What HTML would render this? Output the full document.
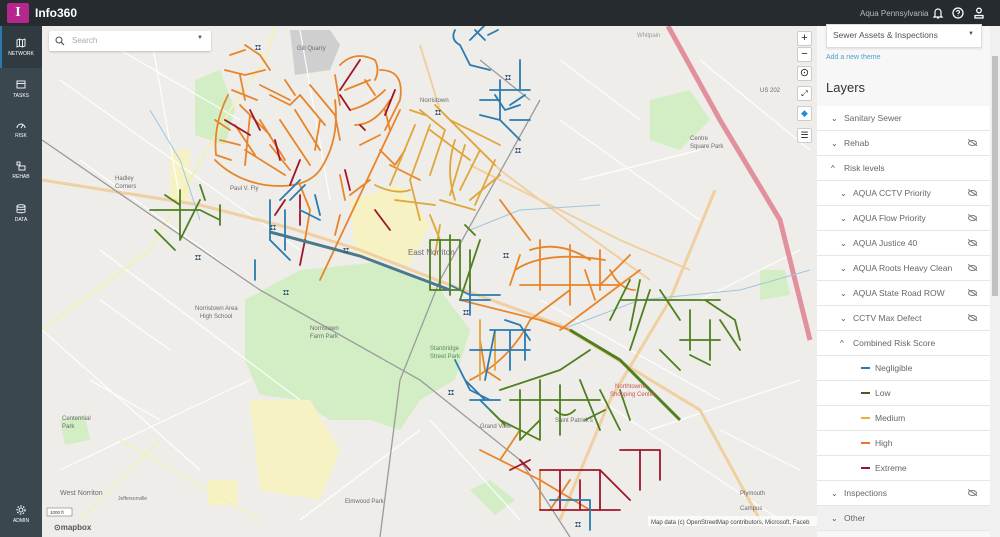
<!DOCTYPE html>
<html><head><meta charset="utf-8"><style>
*{margin:0;padding:0;box-sizing:border-box}
body{width:1000px;height:537px;overflow:hidden;font-family:"Liberation Sans",sans-serif;background:#eeede9;position:relative}
#top{position:absolute;left:0;top:0;width:1000px;height:26px;background:#262b2f;color:#fff}
#logo{position:absolute;left:7px;top:3px;width:22px;height:20px;background:#b5268f;border-radius:2px;color:#fff;font:bold 14px "Liberation Serif",serif;text-align:center;line-height:20px}
#title{position:absolute;left:35px;top:6px;font-size:12px;font-weight:bold}
#org{position:absolute;left:860px;top:9px;font-size:8px;color:#b5bcc2}
#side{position:absolute;left:0;top:26px;width:42px;height:511px;background:#3a474f}
.nav{position:absolute;left:0;width:42px;text-align:center;color:#fff;font-size:5px}
.nav svg{display:block;margin:0 auto 3px}
#map{position:absolute;left:42px;top:26px;width:775px;height:511px;overflow:hidden;background:#eeede9}
#panel{position:absolute;left:817px;top:26px;width:173px;height:511px;background:#f7f7f7}
#sb{position:absolute;left:990px;top:26px;width:10px;height:511px;background:#f0f0f0}
#sb div{position:absolute;left:2px;top:30px;width:6px;height:240px;background:#c1c1c1}
.row{position:absolute;left:0;width:173px;height:25px;background:#fff;border-bottom:1px solid #e6e6e6;font-size:8.5px;color:#666;line-height:25px}
.row .c{position:absolute;top:0;font-size:8px;color:#555}
.eye{position:absolute;right:13px;top:9px;width:9px;height:6px;border:1.3px solid #777;border-radius:50%}
.eye:after{content:"";position:absolute;left:-2px;top:1px;width:11px;height:1.3px;background:#777;transform:rotate(35deg)}
.sw{position:absolute;left:44px;top:11px;width:9px;height:2px}
.btn{position:absolute;left:797px;width:15px;height:15px;background:#fff;border:1px solid #ccc;border-radius:2px;font-size:11px;text-align:center;line-height:13px;color:#222}
</style></head><body>
<div id="top"><div id="logo">I</div><div id="title">Info360</div><div id="org">Aqua Pennsylvania</div>
<svg style="position:absolute;left:932px;top:7px" width="12" height="12" viewBox="0 0 12 12"><path d="M3 9V5a3 3 0 016 0v4l1 1H2zM5 11h2" fill="none" stroke="#fff" stroke-width="1.2"/></svg>
<svg style="position:absolute;left:952px;top:7px" width="12" height="12" viewBox="0 0 12 12"><circle cx="6" cy="6" r="5" fill="none" stroke="#fff" stroke-width="1.3"/><path d="M4.5 4.8a1.5 1.5 0 113 .3c0 1-1.5 1-1.5 2M6 8.5v.6" fill="none" stroke="#fff" stroke-width="1.2"/></svg>
<svg style="position:absolute;left:973px;top:7px" width="12" height="12" viewBox="0 0 12 12"><circle cx="6" cy="3.5" r="2.3" fill="none" stroke="#fff" stroke-width="1.3"/><path d="M2 11V8.5h8V11z" fill="none" stroke="#fff" stroke-width="1.3"/></svg>
</div>
<div id="side">
<div style="position:absolute;left:0;top:0;width:42px;height:42px;background:#2f3a41;border-left:2px solid #2a7ab0"></div>
<div class="nav" style="top:12px"><svg width="10" height="10" viewBox="0 0 10 10"><path d="M1 2l2.5-1 3 1L9 1v7l-2.5 1-3-1L1 9zM3.5 1v7M6.5 2v7" fill="none" stroke="#fff" stroke-width=".9"/></svg>NETWORK</div>
<div class="nav" style="top:54px"><svg width="10" height="10" viewBox="0 0 10 10"><rect x="1" y="1" width="8" height="7" fill="none" stroke="#fff" stroke-width=".9"/><path d="M1 3.5h8" stroke="#fff" stroke-width=".9"/></svg>TASKS</div>
<div class="nav" style="top:94px"><svg width="10" height="10" viewBox="0 0 10 10"><path d="M1 8a4 4 0 018 0M5 8l2-3" fill="none" stroke="#fff" stroke-width=".9"/></svg>RISK</div>
<div class="nav" style="top:135px"><svg width="10" height="10" viewBox="0 0 10 10"><rect x="1" y="1" width="3" height="3" fill="none" stroke="#fff" stroke-width=".9"/><rect x="3" y="5" width="6" height="4" fill="none" stroke="#fff" stroke-width=".9"/></svg>REHAB</div>
<div class="nav" style="top:178px"><svg width="10" height="10" viewBox="0 0 10 10"><ellipse cx="5" cy="2" rx="4" ry="1.3" fill="none" stroke="#fff" stroke-width=".9"/><path d="M1 2v6c0 1 8 1 8 0V2M1 5c0 1 8 1 8 0" fill="none" stroke="#fff" stroke-width=".9"/></svg>DATA</div>
<div class="nav" style="top:479px"><svg width="10" height="10" viewBox="0 0 10 10"><circle cx="5" cy="5" r="2" fill="none" stroke="#fff" stroke-width=".9"/><circle cx="5" cy="5" r="4" fill="none" stroke="#fff" stroke-width="1.2" stroke-dasharray="1.5 1.5"/></svg>ADMIN</div>
</div>
<div id="map">
<svg width="775" height="511" viewBox="42 26 775 511">
<path d="M290 30h40l10 15-10 25-35 5z" fill="#cfcfcf"/>
<g fill="#d3edc5"><path d="M245 300L300 270 380 262 440 290 470 330 455 380 420 400 400 430 370 420 330 420 300 400 260 395 245 360z"/><path d="M195 80l25-10 15 40-10 35-30-10z"/><path d="M650 100l40-10 20 30-30 30-30-10z"/><path d="M760 270l25 0 5 25-30 5z"/><path d="M470 490l20-10 25 20-20 15z"/><path d="M60 420l25-5 5 25-25 5z"/></g>
<g fill="#f6f2c3"><path d="M350 200l50-15 30 40-20 40-55-10z"/><path d="M250 400l60 0 30 50-20 50-60-10z"/><path d="M170 150l20 0 0 50-20 0z"/><path d="M208 480l30 0 0 25-30 0z"/></g>
<g fill="none" stroke="#fff" stroke-width="1.2" opacity=".9">
<path d="M60 80L300 250M80 160L260 290M100 250L300 400M42 330L200 470M150 30L180 200M300 30L330 200M560 120L700 220M540 300L720 400M600 400L780 520M700 60L810 150M430 420L520 520M60 470L250 380M120 50L240 120M700 300L800 250M650 430L800 380M300 520L420 430M580 180L700 150M560 60L640 120M90 380L160 420M100 300L170 350M720 430L800 470"/>
</g>
<g fill="none" stroke-width="3">
<path d="M42 180L200 205 290 228 360 250 450 285 560 325 700 410 760 520" stroke="#f0cfa0"/>
<path d="M420 45L440 110 500 170 580 230 650 280" stroke="#f0cfa0" stroke-width="2"/>
<path d="M715 190L670 300 610 400 560 520" stroke="#f0cfa0"/>
<path d="M470 165L620 240 690 270" stroke="#f0cfa0" stroke-width="2"/>
<path d="M42 330L150 250 230 110 265 60 275 26" stroke="#f3f0b8" stroke-width="2"/>
<path d="M668 26L720 120 780 220 810 340" stroke="#e2909e" stroke-width="5"/>
<path d="M120 440L260 520M80 520L160 440" stroke="#f3f0b8" stroke-width="1.5"/>
</g>
<g fill="none" stroke="#9a9a9a" stroke-width="1.3"><path d="M540 100L440 280 400 380 380 537"/><path d="M42 140L260 290 420 380 520 460 570 537"/><path d="M480 60L530 100"/></g>
<g fill="none" stroke="#9ec7df" stroke-width="1"><path d="M150 110L180 160 200 220M470 230L520 210 600 205M560 330L640 300 740 290 810 270"/></g>
<g fill="none" stroke-linecap="round" stroke-linejoin="round" stroke-width="1.8">
<g stroke="#e8842a">
<path d="M245 45l15 10 10 15M230 55l15-5M225 70l20 5 20-5M240 75l5 25M232 90l25 10M270 95l20 10 10-10M260 85l30 15M285 80l10 15"/>
<path d="M228 95q-15 30-12 60l15 5M215 120l15 10M220 140l20 5M215 160q20 20 50 25 40 5 55-15 20-30 15-70M240 105l30 30M250 115l-5 50M235 125l20 30M260 120l25 40M270 145l20 25M245 150l40 25M280 120l30 45M295 110l25 40M300 95l25 30M310 85l25 30 5 25M320 120l-5 30"/>
<path d="M340 65q15-15 35-5 5 10 0 20M335 75l5 30M345 90l25-10M350 110q20-5 35-20M355 125q20 0 35-25M365 80l10 15M380 70q25 0 20 30l-15 30M385 110l5 20"/>
<path d="M400 110l-80 170M360 145l20-10M380 150l15 15 10-15M390 165l30 15M300 185l10 25 -5 30M340 175l5 25M350 195l20-15M340 215l-5 20"/>
<path d="M530 250q30-10 60 10M515 270q30-20 90-10M520 285h100M540 240v50M570 245v60M600 250v40M630 255l-30 30M460 300l80 20 30 10M560 330q40-30 80-60M500 200l30 40M520 255l-10 30M585 270l10 30M610 270q10 20 25 20"/>
<path d="M470 380q40-20 60-60l40-30M480 450l60 30 50 30M500 460l20-30M540 470v40M570 480l-20 30M480 340l5 30 15 10"/>
</g>
<g stroke="#e0a63a"><path d="M415 125l-25 60M430 125l-20 55 10 40M445 130l-15 45M455 140q-10 30 0 60M465 145l-15 50M480 150l-20 40M495 160l-20 45M500 175l-30 25M375 185q20 10 35 5M395 200l40 5M440 200l35 10M430 215l10 25M440 225l-5 30M410 110l15 5M420 110l25 20M435 105l60 60M430 130l40 30M450 120l50 25"/><path d="M480 320v60M495 330v40"/></g>
<g stroke="#a0152a"><path d="M225 120l25 15M250 110l10 20M275 140l5 20M300 160l-10 25M285 200l-10 15M345 170l5 20M340 95l10 15M360 60l-20 30M395 90l-10 25M360 125l5 5M375 210l15 20M300 195l0 30M520 460l10 10M540 470h60v40M560 470v40M580 480v30M600 470l30 30M620 450h40v30M640 450v40M540 510h80M510 470l20-10M305 240l-5 25"/></g>
<g stroke="#2b7bb0"><path d="M455 30q-5 10 5 15l10 20 20 5M470 40l20-20M475 30l10 10M488 35l10-5M500 80v40l20 20M490 90h40M510 120h20M520 60v30M480 100h20M495 95l10 15 15-5M480 115l20 5M510 105l15-10"/><path d="M450 285l20 10 30 0M460 300h30M470 285v30M270 200v40l20 20M285 210v40M300 180l-20 20M255 260v20M290 200l15-15M300 210l20 10M315 195l5 20"/><path d="M490 330h40M495 330l-10 50M510 330v40M525 330v30M470 350h60M465 380l20 20M455 360l15 30 20 10M480 400l20 20M470 400h30M505 320l15 5 10 15"/><path d="M550 500h40v30"/></g>
<g stroke="#4f7f1f"><path d="M150 210l50 0 20 10M180 190v50M200 200l-20 40M220 205v20M165 195l15 10M200 185l5 15M155 230l20 20"/><path d="M430 240h30v50h-30zM440 240v50M450 235v60M470 250v40M480 240l-20 60M465 225l10 10"/><path d="M630 280l-20 40M640 280l-10 50M650 290l-20 60M620 300h100M660 290l20 30M690 310v40M710 320v40M680 340h40M720 320l20 30M660 350l20 20M705 300l30 20 5 20M690 355l20 10"/><path d="M500 390l60-20 30-20M510 400h90M520 390v50M540 380v60M560 385v50M580 380l20 50M600 390l20 40M620 390l10 30M500 420l40 20M540 420l-20 20M490 410l15 15M555 410q10 10 20 0M585 420l20-10"/></g>
</g>
<path d="M570 330l50 30 60 60" stroke="#4f7f1f" stroke-width="3" fill="none"/>
<path d="M270 232L360 256 450 290" stroke="#4a7a8a" stroke-width="3" fill="none"/>
<g fill="#3b5b77"><path d="M255 45h6l-3 5zM255 50h6l-3-5z"/><path d="M505 75h6l-3 5zM505 80h6l-3-5z"/><path d="M435 110h6l-3 5zM435 115h6l-3-5z"/><path d="M515 148h6l-3 5zM515 153h6l-3-5z"/><path d="M270 225h6l-3 5zM270 230h6l-3-5z"/><path d="M343 248h6l-3 5zM343 253h6l-3-5z"/><path d="M195 255h6l-3 5zM195 260h6l-3-5z"/><path d="M283 290h6l-3 5zM283 295h6l-3-5z"/><path d="M463 310h6l-3 5zM463 315h6l-3-5z"/><path d="M503 253h6l-3 5zM503 258h6l-3-5z"/><path d="M448 390h6l-3 5zM448 395h6l-3-5z"/><path d="M575 522h6l-3 5zM575 527h6l-3-5z"/></g>
<g font-family="Liberation Sans" font-size="6" fill="#6b6b6b"><text x="297" y="50">Gill Quarry</text><text x="420" y="102">Norristown</text><text x="408" y="255" font-size="8">East Norriton</text><text x="230" y="190">Paul V. Fly</text><text x="195" y="310">Norristown Area</text><text x="200" y="318">High School</text><text x="310" y="330">Norristown</text><text x="310" y="338">Farm Park</text><text x="430" y="350" fill="#5a8a5a">Stanbridge</text><text x="430" y="358" fill="#5a8a5a">Street Park</text><text x="115" y="180">Hadley</text><text x="115" y="188">Corners</text><text x="60" y="495" font-size="7">West Norriton</text><text x="62" y="420">Centennial</text><text x="62" y="428">Park</text><text x="480" y="428">Grand View</text><text x="555" y="422">Saint Patrick's</text><text x="345" y="503">Elmwood Park</text><text x="740" y="495">Plymouth</text><text x="740" y="510">Campus</text><text x="615" y="388" fill="#c55">Northtowne</text><text x="610" y="396" fill="#c55">Shopping Center</text><text x="690" y="140">Centre</text><text x="690" y="148">Square Park</text><text x="118" y="500" font-size="5">Jeffersonville</text><text x="760" y="92">US 202</text><text x="637" y="37" fill="#999">Whitpain</text></g>
<rect x="47" y="508" width="25" height="8" fill="#fff" stroke="#777" stroke-width=".6"/><text x="50" y="514" font-family="Liberation Sans" font-size="4.5" fill="#333">1000 ft</text>
<text x="54" y="530" font-family="Liberation Sans" font-size="8" font-weight="bold" fill="#555">⊙mapbox</text>
<rect x="648" y="516" width="169" height="10" fill="#fff" opacity=".7"/><text x="651" y="524" font-family="Liberation Sans" font-size="6" fill="#444">Map data (c) OpenStreetMap contributors, Microsoft, Faceb</text>
</svg>
</div>
<div style="position:absolute;left:49px;top:31px;width:162px;height:20px;background:#fff;border-radius:2px;box-shadow:0 1px 2px rgba(0,0,0,.2)">
<svg style="position:absolute;left:6px;top:5px" width="10" height="10" viewBox="0 0 10 10"><circle cx="4" cy="4" r="3" fill="none" stroke="#555" stroke-width="1.1"/><path d="M6.3 6.3L9 9" stroke="#555" stroke-width="1.2"/></svg>
<span style="position:absolute;left:23px;top:5px;font-size:8px;color:#aaa">Search</span>
<span style="position:absolute;left:148px;top:4px;font-size:6px;color:#555">▼</span></div>
<div class="btn" style="top:31px">+</div><div class="btn" style="top:47px">−</div>
<div class="btn" style="top:66px">⊙</div><div class="btn" style="top:86px;font-size:8px">⤢</div>
<div class="btn" style="top:106px;color:#2a8ad0;font-size:9px">◆</div><div class="btn" style="top:128px;font-size:9px">☰</div>
<div id="panel">
<div style="position:absolute;left:9px;top:-2px;width:156px;height:24px;background:#fff;border:1px solid #ddd;box-shadow:0 1px 2px rgba(0,0,0,.1)"><span style="position:absolute;left:6px;top:5px;font-size:8.5px;color:#555">Sewer Assets &amp; Inspections</span><span style="position:absolute;right:7px;top:6px;font-size:6px;color:#555">▼</span></div>
<div style="position:absolute;left:9px;top:28px;font-size:7px;color:#4aa3cf">Add a new theme</div>
<div style="position:absolute;left:9px;top:54px;font-size:13px;color:#333">Layers</div>
<div class="row" style="top:80px"><span class="c" style="left:14px">⌄</span><span style="position:absolute;left:27px">Sanitary Sewer</span></div>
<div class="row" style="top:105px"><span class="c" style="left:14px">⌄</span><span style="position:absolute;left:27px">Rehab</span><i class="eye"></i></div>
<div class="row" style="top:130px"><span class="c" style="left:14px">^</span><span style="position:absolute;left:27px">Risk levels</span></div>
<div class="row" style="top:155px"><span class="c" style="left:23px">⌄</span><span style="position:absolute;left:36px">AQUA CCTV Priority</span><i class="eye"></i></div>
<div class="row" style="top:180px"><span class="c" style="left:23px">⌄</span><span style="position:absolute;left:36px">AQUA Flow Priority</span><i class="eye"></i></div>
<div class="row" style="top:205px"><span class="c" style="left:23px">⌄</span><span style="position:absolute;left:36px">AQUA Justice 40</span><i class="eye"></i></div>
<div class="row" style="top:230px"><span class="c" style="left:23px">⌄</span><span style="position:absolute;left:36px">AQUA Roots Heavy Clean</span><i class="eye"></i></div>
<div class="row" style="top:255px"><span class="c" style="left:23px">⌄</span><span style="position:absolute;left:36px">AQUA State Road ROW</span><i class="eye"></i></div>
<div class="row" style="top:280px"><span class="c" style="left:23px">⌄</span><span style="position:absolute;left:36px">CCTV Max Defect</span><i class="eye"></i></div>
<div class="row" style="top:305px"><span class="c" style="left:23px">^</span><span style="position:absolute;left:36px">Combined Risk Score</span></div>
<div class="row" style="top:330px"><i class="sw" style="background:#2b7bb0"></i><span style="position:absolute;left:58px">Negligible</span></div>
<div class="row" style="top:355px"><i class="sw" style="background:#3f5f2a"></i><span style="position:absolute;left:58px">Low</span></div>
<div class="row" style="top:380px"><i class="sw" style="background:#e8b23a"></i><span style="position:absolute;left:58px">Medium</span></div>
<div class="row" style="top:405px"><i class="sw" style="background:#e8742a"></i><span style="position:absolute;left:58px">High</span></div>
<div class="row" style="top:430px"><i class="sw" style="background:#9a1530"></i><span style="position:absolute;left:58px">Extreme</span></div>
<div class="row" style="top:455px"><span class="c" style="left:14px">⌄</span><span style="position:absolute;left:27px">Inspections</span><i class="eye"></i></div>
<div class="row" style="top:480px;background:#f0f0f0"><span class="c" style="left:14px">⌄</span><span style="position:absolute;left:27px">Other</span></div>
</div>
<div id="sb"><div></div></div>
</body></html>
